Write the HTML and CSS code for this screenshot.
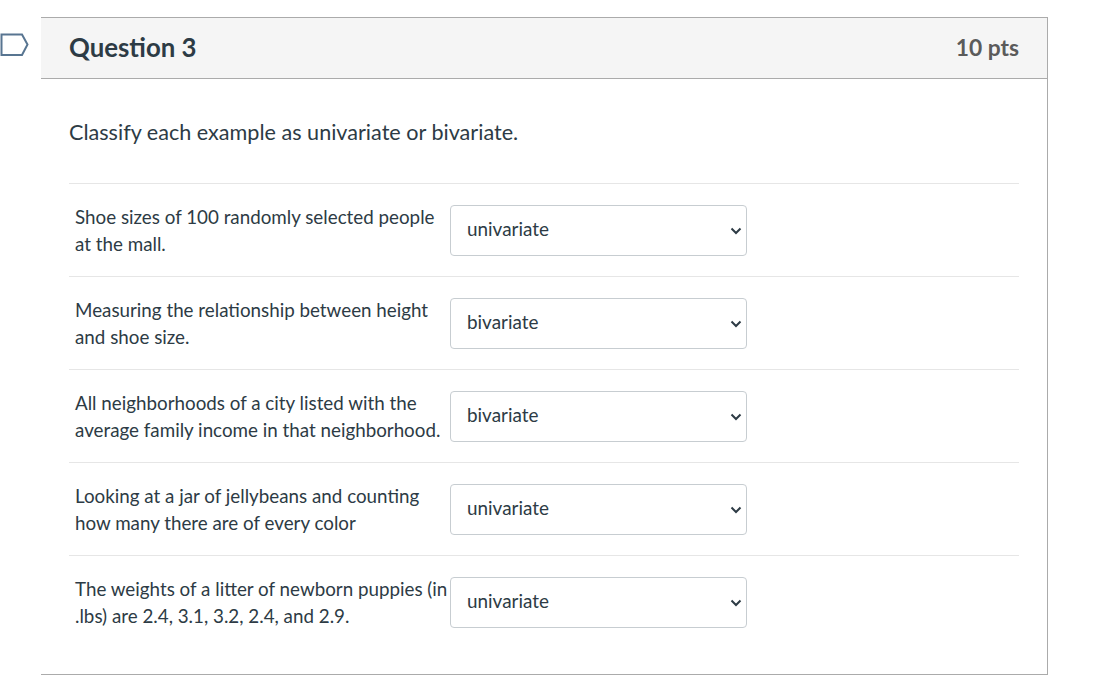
FILE: index.html
```html
<!DOCTYPE html>
<html>
<head>
<meta charset="utf-8">
<link rel="stylesheet" href="styles.css">
</head>
<body>
<div class="page">
  <div class="flag-col">
    <svg class="flag" width="30" height="24" viewBox="0 0 30 24">
      <polygon points="1.5,1.5 22,1.5 27.5,11.5 22,22 1.5,22" fill="none" stroke="#587591" stroke-width="2" stroke-linejoin="miter"/>
    </svg>
  </div>
  <div class="card">
    <div class="header">
      <span class="title">Question 3</span>
      <span class="pts">10 pts</span>
    </div>
    <div class="body">
      <p class="prompt">Classify each example as univariate or bivariate.</p>
      <div class="rows">
        <div class="row">
          <div class="q">Shoe sizes of 100 randomly selected people at the mall.</div>
          <div class="sel"><span>univariate</span><svg class="chev" width="12" height="8" viewBox="0 0 12 8"><path d="M1.5 1.5 L6 6 L10.5 1.5" fill="none" stroke="#2d3b45" stroke-width="2"/></svg></div>
        </div>
        <div class="row">
          <div class="q">Measuring the relationship between height and shoe size.</div>
          <div class="sel"><span>bivariate</span><svg class="chev" width="12" height="8" viewBox="0 0 12 8"><path d="M1.5 1.5 L6 6 L10.5 1.5" fill="none" stroke="#2d3b45" stroke-width="2"/></svg></div>
        </div>
        <div class="row">
          <div class="q">All neighborhoods of a city listed with the average family income in that neighborhood.</div>
          <div class="sel"><span>bivariate</span><svg class="chev" width="12" height="8" viewBox="0 0 12 8"><path d="M1.5 1.5 L6 6 L10.5 1.5" fill="none" stroke="#2d3b45" stroke-width="2"/></svg></div>
        </div>
        <div class="row">
          <div class="q">Looking at a jar of jellybeans and counting how many there are of every color</div>
          <div class="sel"><span>univariate</span><svg class="chev" width="12" height="8" viewBox="0 0 12 8"><path d="M1.5 1.5 L6 6 L10.5 1.5" fill="none" stroke="#2d3b45" stroke-width="2"/></svg></div>
        </div>
        <div class="row">
          <div class="q">The weights of a litter of newborn puppies (in .lbs) are 2.4, 3.1, 3.2, 2.4, and 2.9.</div>
          <div class="sel"><span>univariate</span><svg class="chev" width="12" height="8" viewBox="0 0 12 8"><path d="M1.5 1.5 L6 6 L10.5 1.5" fill="none" stroke="#2d3b45" stroke-width="2"/></svg></div>
        </div>
      </div>
    </div>
  </div>
</div>
</body>
</html>
```
FILE: styles.css
```css
html, body {
  margin: 0;
  padding: 0;
  background: #ffffff;
}
body {
  font-family: Lato, "Open Sans", sans-serif;
  color: #2d3b45;
}
.page {
  display: flex;
  align-items: flex-start;
  padding-top: 17px;
}
.flag-col {
  width: 41px;
  flex: none;
  padding-top: 16px;
}
.flag {
  display: block;
  margin-left: 0;
}
.card {
  width: 1006px;
  border-top: 1px solid #ababab;
  border-right: 1px solid #ababab;
  border-bottom: 1px solid #ababab;
  background: #fff;
}
.header {
  height: 60px;
  background: #f5f5f5;
  border-bottom: 1px solid #ababab;
  display: flex;
  align-items: center;
  justify-content: space-between;
  padding: 0 28px;
}
.title {
  font-size: 25.8px;
  font-weight: 700;
  color: #2d3b45;
  margin-top: -3px;
}
.pts {
  font-size: 22.8px;
  font-weight: 700;
  color: #5b5b5b;
  margin-top: -3px;
}
.body {
  padding: 38px 28px 26px 28px;
}
.prompt {
  margin: 0 0 36px 0;
  font-size: 21.6px;
  line-height: 30px;
}
.rows {
  display: flex;
  flex-direction: column;
}
.row {
  display: flex;
  align-items: center;
  height: 92px;
  border-top: 1px solid #e6e6e6;
}
.q {
  width: 375px;
  padding-left: 6px;
  font-size: 18.8px;
  line-height: 27px;
  flex: none;
}
.sel {
  width: 297px;
  height: 51px;
  box-sizing: border-box;
  border: 1px solid #c7cdd1;
  border-radius: 4px;
  display: flex;
  align-items: center;
  justify-content: space-between;
  padding: 0 4px 0 16px;
  font-size: 18.9px;
  flex: none;
}
.sel span {
  margin-top: -4px;
}
.chev {
  display: block;
  margin-top: 2px;
}
```
